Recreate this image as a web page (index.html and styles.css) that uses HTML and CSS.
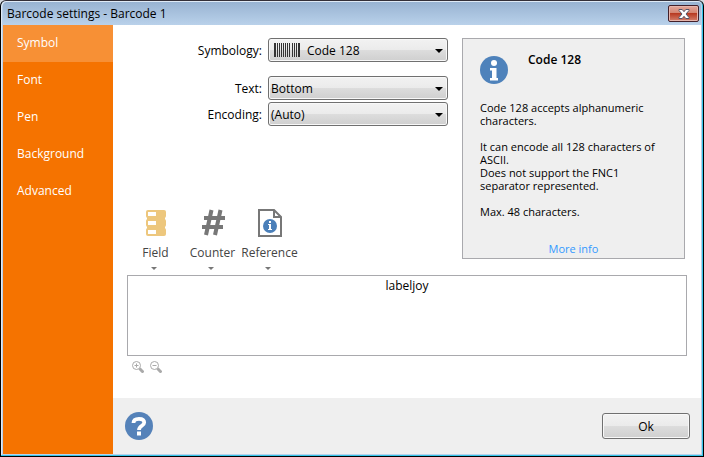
FILE: index.html
```html
<!DOCTYPE html>
<html lang="en">
<head>
    <meta charset="UTF-8">
    <meta name="viewport" content="width=device-width, initial-scale=1.0">
    <title>Barcode settings - Barcode 1</title>
    <link rel="stylesheet" href="styles.css">
</head>
<body>

<div class="window">
    <header class="titlebar">
        <h1>Barcode settings - Barcode 1</h1>
        <button class="close-btn" aria-label="Close">
            <svg width="12" height="10" viewBox="0 0 12 10">
                <path d="M1 .5h3.2L6 2.7 7.8.5H11v1L8 5l3 3.5v1H7.8L6 7.3 4.2 9.500H1v-1L4 5 1 1.500z" fill="#fff" stroke="#55566a"/>
            </svg>
        </button>
    </header>

    <div class="content">
        <nav class="sidebar">
            <a href="#symbol" class="active">Symbol</a>
            <a href="#font">Font</a>
            <a href="#pen">Pen</a>
            <a href="#background">Background</a>
            <a href="#advanced">Advanced</a>
        </nav>

        <div class="panel">
            <main class="main">
                <div class="top">
                    <div class="settings">
                        <div class="row row-symbology">
                            <label for="symbology">Symbology:</label>
                            <div class="select with-icon">
                                <select id="symbology">
                                    <option>Code 128</option>
                                </select>
                                <svg class="barcode" width="27" height="14" viewBox="0 0 27 14" shape-rendering="crispEdges">
                                    <path d="M0 0h2v14H0zM3 0h1v14H3zM5 0h1v14H5zM7 0h1v14H7zM9 0h1v14H9zM11 0h1v14h-1zM13 0h1v14h-1zM15 0h1v14h-1zM18 0h1v14h-1zM20 0h1v14h-1zM22 0h1v14h-1zM24 0h2v14h-2z" fill="#333"/>
                                </svg>
                            </div>
                        </div>
                        <div class="row">
                            <label for="text">Text:</label>
                            <div class="select">
                                <select id="text">
                                    <option>Bottom</option>
                                </select>
                            </div>
                        </div>
                        <div class="row">
                            <label for="encoding">Encoding:</label>
                            <div class="select">
                                <select id="encoding">
                                    <option>(Auto)</option>
                                </select>
                            </div>
                        </div>

                        <div class="tools">
                            <button class="tool">
                                <svg width="28" height="28" viewBox="0 0 28 28">
                                    <g fill="#edc77d">
                                        <rect x="4" y="1" width="20" height="8" rx="2"/>
                                        <rect x="4" y="10" width="20" height="8" rx="2"/>
                                        <rect x="4" y="19" width="20" height="8" rx="2"/>
                                        <rect x="5" y="8" width="18" height="12"/>
                                    </g>
                                    <path d="M6 3h8v4H6zM6 12h8v4H6zM6 21h8v4H6z" fill="#fff"/>
                                </svg>
                                <span>Field</span>
                            </button>
                            <button class="tool">
                                <svg width="28" height="28" viewBox="0 0 28 28">
                                    <path d="M12.5 1L7 26M21.5 1L16 26M5 9h21M3 18h21" fill="none" stroke="#777" stroke-width="4"/>
                                </svg>
                                <span>Counter</span>
                            </button>
                            <button class="tool">
                                <svg width="28" height="28" viewBox="0 0 28 28">
                                    <path d="M3 1h15l7 7v19H3zM18 1v7h7" fill="#fff" stroke="#777" stroke-width="2"/>
                                    <circle cx="14" cy="17" r="7" fill="#4a7fb9"/>
                                    <path d="M13 12h2v2h-2zM12 15h3v5h1v1h-4v-1h1v-4h-1z" fill="#fff"/>
                                </svg>
                                <span>Reference</span>
                            </button>
                        </div>
                    </div>

                    <aside class="info">
                        <div class="info-head">
                            <svg width="28" height="28" viewBox="0 0 28 28">
                                <circle cx="14" cy="14" r="14" fill="#4e82bb"/>
                                <circle cx="14" cy="7" r="3" fill="#fff"/>
                                <path d="M10 12h6.5v10H18v2.5h-8V22h2v-7.500h-2z" fill="#fff"/>
                            </svg>
                            <h2>Code 128</h2>
                        </div>
                        <p>Code 128 accepts alphanumeric characters.</p>
                        <p>It can encode all 128 characters of ASCII.<br>Does not support the FNC1 separator represented.</p>
                        <p>Max. 48 characters.</p>
                        <a href="#info" class="more">More info</a>
                    </aside>
                </div>

                <textarea class="value" aria-label="Barcode value">labeljoy</textarea>

                <div class="zoom">
                    <button aria-label="Zoom in">
                        <svg width="12" height="12" viewBox="0 0 12 12" fill="none" stroke="#aaa">
                            <circle cx="4.5" cy="4.5" r="4"/>
                            <path d="M2.5 4.5h4M4.500 2.5v4"/>
                            <path d="M7.5 7.5l4 4" stroke-width="3"/>
                        </svg>
                    </button>
                    <button aria-label="Zoom out">
                        <svg width="12" height="12" viewBox="0 0 12 12" fill="none" stroke="#aaa">
                            <circle cx="4.5" cy="4.5" r="4"/>
                            <path d="M2.5 4.5h4"/>
                            <path d="M7.5 7.5l4 4" stroke-width="3"/>
                        </svg>
                    </button>
                </div>
            </main>

            <footer class="footer">
                <button class="help-btn" aria-label="Help">
                    <svg width="28" height="28" viewBox="0 0 28 28">
                        <circle cx="14" cy="14" r="14" fill="#5582b9"/>
                        <path d="M8.5 11C8.500 8 10.500 6.800 14 6.800c3.500 0 5.200 1.200 5.200 3.700 0 3.500-5.200 3-5.200 7.500" fill="none" stroke="#fff" stroke-width="3.800"/>
                        <path d="M12 19.500h4v4h-4z" fill="#fff"/>
                    </svg>
                </button>
                <button class="ok-btn">Ok</button>
            </footer>
        </div>
    </div>
</div>

</body>
</html>
```
FILE: styles.css
```css
* {
    box-sizing: border-box;
}

body {
    margin: 0;
    background-color: #d5dbe2;
    color: #000;
    font-family: "Open Sans", "Noto Sans", sans-serif;
    font-size: 12px;
    line-height: 16px;
}

button,
select,
textarea {
    font: inherit;
    color: inherit;
}

button {
    padding: 0;
    border: none;
    background: none;
    cursor: pointer;
}

svg {
    display: block;
}

.window {
    display: flex;
    flex-direction: column;
    min-height: 100vh;
    padding: 1px 2px 2px;
    border: 1px solid #000;
    border-top-color: #332f38;
    border-radius: 6px 6px 0 0;
    background-color: #b9d1ea;
    box-shadow: inset -1px -1px #35c5e8, inset 1px 1px #dfeaf6;
}

.titlebar {
    display: flex;
    justify-content: space-between;
    align-items: center;
    height: 23px;
    padding: 0 2px 0 4px;
    border-radius: 4px 4px 0 0;
    background: linear-gradient(#98b3d2, #b9d1ea);
}

.titlebar h1 {
    margin: 0;
    font-size: 12px;
    font-weight: normal;
}

.close-btn {
    display: flex;
    justify-content: center;
    align-items: center;
    width: 31px;
    height: 17px;
    border: 1px solid #43202a;
    border-radius: 2px;
    background: linear-gradient(#e3a79c, #d3836f 48%, #b83a22 50%, #d4806c);
    box-shadow: inset 0 0 0 1px #e6b5ac;
}

.content {
    display: flex;
    flex: 1;
}

.sidebar {
    width: 110px;
    background-color: #f57300;
}

.sidebar a {
    display: block;
    padding: 10px 14px 11px;
    color: #fff;
    text-decoration: none;
}

.sidebar a.active {
    background-color: #f79035;
}

.panel {
    display: flex;
    flex: 1;
    flex-direction: column;
    background-color: #fff;
}

.main {
    flex: 1;
    padding: 13px 14px;
}

.top {
    display: flex;
    gap: 14px;
    padding-right: 2px;
}

.settings {
    flex: 1;
}

.row {
    display: flex;
    justify-content: flex-end;
    align-items: center;
    gap: 6px;
    margin-bottom: 2px;
}

.row-symbology {
    margin-bottom: 14px;
}

.row label {
    padding-top: 2px;
}

.select {
    position: relative;
    width: 180px;
}

.select select {
    display: block;
    width: 100%;
    height: 24px;
    padding: 2px 20px 0 2px;
    appearance: none;
}

.select select,
.ok-btn {
    border: 1px solid #707070;
    border-radius: 3px;
    background: linear-gradient(#f2f2f2, #ebebeb 49%, #dddddd 50%, #cfcfcf);
    box-shadow: inset 0 0 0 1px #f8f8f8;
}

.select::after {
    content: "";
    position: absolute;
    top: 11px;
    right: 5px;
    border: 4px solid transparent;
    border-top-color: #000;
    border-bottom: none;
}

.select.with-icon select {
    padding-left: 38px;
}

.barcode {
    position: absolute;
    top: 5px;
    left: 6px;
}

.tools {
    display: flex;
    margin-top: 83px;
}

.tool {
    display: flex;
    flex-direction: column;
    align-items: center;
    width: 57px;
    color: #444;
}

.tool span {
    margin-top: 8px;
}

.tool::after {
    content: "";
    margin: 6px 3px 4px 0;
    border: 3px solid transparent;
    border-top-color: #777;
    border-bottom: none;
}

.info {
    display: flex;
    flex-direction: column;
    align-self: flex-start;
    width: 223px;
    padding: 13px 17px 3px;
    border: 1px solid #a9a9ad;
    background-color: #efefef;
    font-size: 11px;
    line-height: 13px;
}

.info-head {
    display: flex;
    gap: 20px;
    margin-bottom: 17px;
}

.info-head svg {
    margin-top: 4px;
}

.info-head h2 {
    margin: 0;
    font-size: 12px;
    font-weight: 600;
    line-height: 16px;
}

.info p {
    margin: 0 0 13px;
}

.more {
    align-self: center;
    margin-top: 11px;
    color: #3399ff;
    line-height: 13px;
    text-decoration: none;
}

.value {
    display: block;
    width: 100%;
    height: 81px;
    margin: 1px 0 5px;
    padding: 2px;
    border: 1px solid #a9a9ad;
    background-color: #fff;
    resize: none;
    text-align: center;
}

.zoom {
    display: flex;
    gap: 6px;
    padding-left: 5px;
}

.footer {
    display: flex;
    justify-content: space-between;
    align-items: center;
    height: 56px;
    padding: 0 11px 0 12px;
    background-color: #efefef;
}

.ok-btn {
    width: 88px;
    height: 26px;
    padding-top: 2px;
}
```
